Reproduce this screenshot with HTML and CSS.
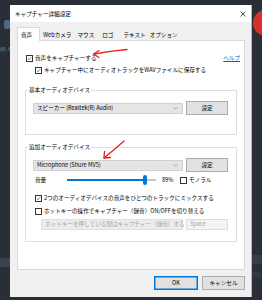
FILE: index.html
```html
<!DOCTYPE html>
<html lang="ja">
<head>
<meta charset="utf-8">
<link rel="stylesheet" href="styles.css">
</head>
<body>
<div class="desk">
  <div class="side-left">
    <span class="app-icon"></span>
    <span class="coord">(0, 0</span>
    <span class="band"></span>
  </div>
  <div class="dialog">
    <div class="titlebar">
      <span class="title">キャプチャー詳細設定</span>
      <svg class="close" viewBox="0 0 6 6" width="6" height="6"><path d="M0.5 0.5L5.5 5.5M5.5 0.5L0.5 5.5" stroke="#222" stroke-width="0.8"/></svg>
    </div>
    <div class="dlg-body">
      <div class="tabs">
        <span class="tab active">音声</span>
        <span class="tab">Webカメラ</span>
        <span class="tab">マウス</span>
        <span class="tab">ロゴ</span>
        <span class="tab">テキスト</span>
        <span class="tab">オプション</span>
      </div>
      <div class="panel">
        <div class="row row1">
          <span class="cb checked"><svg viewBox="0 0 8 8"><path d="M1.3 4.2L3.2 6L6.8 1.8" fill="none" stroke="#222" stroke-width="0.9"/></svg></span>
          <span>音声をキャプチャーする</span>
          <span class="help">ヘルプ</span>
        </div>
        <div class="row row2">
          <span class="cb checked"><svg viewBox="0 0 8 8"><path d="M1.3 4.2L3.2 6L6.8 1.8" fill="none" stroke="#222" stroke-width="0.9"/></svg></span>
          <span>キャプチャー中にオーディオトラックをWAVファイルに保存する</span>
        </div>

        <div class="group g1">
          <div class="legend">基本オーディオデバイス</div>
          <div class="dev-row">
            <div class="combo"><span>スピーカー (Realtek(R) Audio)</span><svg class="chev" viewBox="0 0 6 4" width="5" height="3"><path d="M0.5 0.5L3 3L5.5 0.5" fill="none" stroke="#777" stroke-width="0.8"/></svg></div>
            <div class="btn set">設定</div>
          </div>
        </div>

        <div class="group g2">
          <div class="legend">追加オーディオデバイス</div>
          <div class="dev-row">
            <div class="combo"><span>Microphone (Shure MV5)</span><svg class="chev" viewBox="0 0 6 4" width="5" height="3"><path d="M0.5 0.5L3 3L5.5 0.5" fill="none" stroke="#777" stroke-width="0.8"/></svg></div>
            <div class="btn set">設定</div>
          </div>
          <div class="row vol-row">
            <span class="vol-label">音量</span>
            <div class="slider"><span class="fill"></span><span class="thumb"></span><span class="rest"></span></div>
            <span class="pct">89%</span>
            <span class="cb"></span>
            <span>モノラル</span>
          </div>
          <div class="row mix-row">
            <span class="cb checked"><svg viewBox="0 0 8 8"><path d="M1.3 4.2L3.2 6L6.8 1.8" fill="none" stroke="#222" stroke-width="0.9"/></svg></span>
            <span>2つのオーディオデバイスの音声をひとつのトラックにミックスする</span>
          </div>
          <div class="row hot-row">
            <span class="cb"></span>
            <span>ホットキーの操作でキャプチャー（録音）ON/OFFを切り替える</span>
          </div>
          <div class="dis-row">
            <div class="combo disabled"><span>ホットキーを押している間はキャプチャー（録音）する</span><svg class="chev" viewBox="0 0 6 4" width="5" height="3"><path d="M0.5 0.5L3 3L5.5 0.5" fill="none" stroke="#bbb" stroke-width="0.8"/></svg></div>
            <div class="textbox disabled">Space</div>
          </div>
        </div>
      </div>
      <div class="footer">
        <div class="btn ok">OK</div>
        <div class="btn cancel">キャンセル</div>
      </div>
    </div>
  </div>
  <div class="side-right">
    <span class="rec"></span>
    <span class="rband b1"></span>
    <span class="rband b2"></span>
  </div>
</div>
<svg class="annot" viewBox="0 0 262 300" width="262" height="300">
  <path d="M127 49.5 Q110 51 94 54" fill="none" stroke="#e3231f" stroke-width="1.3" stroke-linecap="round"/>
  <path d="M99 50.5 L93.5 54 L99 57.5" fill="none" stroke="#e3231f" stroke-width="1.3" stroke-linecap="round" stroke-linejoin="round"/>
  <path d="M124 141 Q115 149 104 158" fill="none" stroke="#e3231f" stroke-width="1.3" stroke-linecap="round"/>
  <path d="M104.5 151.5 L104 158 L110.5 157.5" fill="none" stroke="#e3231f" stroke-width="1.3" stroke-linecap="round" stroke-linejoin="round"/>
</svg>
</body>
</html>
```

FILE: styles.css
```css
* { box-sizing: border-box; }

body {
  margin: 0;
  width: 262px;
  height: 300px;
  overflow: hidden;
  position: relative;
  background: #2a2f37;
  font-family: "Noto Sans CJK JP", "Noto Sans", sans-serif;
  font-size: 5.6px;
  line-height: 8px;
  color: #000;
}

.desk {
  display: flex;
  height: 300px;
}

/* background app strips */
.side-left {
  width: 10px;
  flex: none;
  display: flex;
  flex-direction: column;
  align-items: flex-start;
  padding-top: 20px;
}
.app-icon {
  width: 6px;
  height: 9px;
  margin-left: 4px;
  background: #4a6a8c;
  border-radius: 2px;
}
.coord {
  margin-top: 16px;
  font-family: "DejaVu Sans", sans-serif;
  font-size: 5px;
  color: #9aa3ad;
  white-space: nowrap;
}
.band {
  margin-top: 205px;
  width: 10px;
  height: 9px;
  background: #3a4350;
}

.side-right {
  flex: 1;
  position: relative;
  overflow: hidden;
}
.rec {
  position: absolute;
  left: 1px;
  top: 10px;
  width: 26px;
  height: 26px;
  border-radius: 50%;
  background: #d8312b;
}
.rband {
  position: absolute;
  left: 0;
  width: 10px;
  height: 9px;
  background: #353c47;
}
.rband.b1 { top: 255px; }
.rband.b2 { top: 272px; height: 6px; background: #303742; }

/* dialog */
.dialog {
  flex: none;
  width: 242px;
  height: 292px;
  margin-top: 5px;
  background: #f0f0f0;
  display: flex;
  flex-direction: column;
  border-right: 1px solid #b5b5b5;
}
.titlebar {
  height: 17px;
  flex: none;
  background: #fff;
  display: flex;
  align-items: center;
  justify-content: space-between;
  padding: 0 5px 0 5px;
}
.close { display: block; }

.dlg-body {
  flex: 1;
  display: flex;
  flex-direction: column;
  padding: 5px 6px 0 7px;
}
.tabs {
  display: flex;
  align-items: flex-end;
  height: 13px;
  position: relative;
  z-index: 1;
}
.tab {
  height: 11px;
  display: flex;
  align-items: center;
  white-space: nowrap;
}
.tab.active {
  height: 14px;
  margin-bottom: -1px;
  background: #fff;
  border: 1px solid #d9d9d9;
  border-bottom: none;
  padding: 0 7px 0 3px;
}
.tab:nth-child(2) { padding: 0 3px; }
.tab:nth-child(3) { padding: 0 4px 0 3px; }
.tab:nth-child(4) { padding: 0 5px 0 4px; }
.tab:nth-child(5) { padding: 0 2px 0 5px; }
.tab:nth-child(6) { padding: 0 2px; }

.panel {
  flex: none;
  height: 230px;
  background: #fff;
  border: 1px solid #d9d9d9;
}

.row {
  display: flex;
  align-items: center;
  height: 10px;
  white-space: nowrap;
}
.row1 { margin: 12px 4px 0 8px; }
.row2 { margin: 2px 0 0 17px; }

.cb {
  flex: none;
  width: 7px;
  height: 7px;
  border: 0.8px solid #333;
  background: #fff;
  margin-right: 2px;
  display: flex;
}
.cb svg { width: 100%; height: 100%; display: block; }

.help {
  margin-left: auto;
  color: #1a5fb4;
  text-decoration: underline;
}

.group {
  margin: 15px 7px 0;
  border: 1px solid #dedede;
}
.g1 { padding-bottom: 19px; }
.g2 { margin-top: 12px; padding-bottom: 11px; }
.legend {
  margin: -5px 0 0 2px;
  padding: 0 1px;
  width: max-content;
  height: 9px;
  line-height: 9px;
  background: #fff;
  white-space: nowrap;
}

.dev-row {
  display: flex;
  align-items: center;
  gap: 3px;
  height: 14px;
  margin: 6px 0 0 7px;
}
.combo {
  width: 150px;
  height: 11px;
  background: #e5e5e5;
  border: 1px solid #d0d0d0;
  display: flex;
  align-items: center;
  justify-content: space-between;
  padding: 0 4px 0 3px;
  white-space: nowrap;
}
.chev { display: block; }

.btn {
  height: 14px;
  background: #e1e1e1;
  border: 1px solid #adadad;
  display: flex;
  align-items: center;
  justify-content: center;
  white-space: nowrap;
}
.set { width: 42px; }

.vol-row { margin: 3px 0 0 9px; }
.vol-label { width: 32px; }
.slider {
  width: 89px;
  height: 10px;
  display: flex;
  align-items: center;
}
.fill { width: 76px; height: 2px; background: #0078d7; }
.thumb { width: 4px; height: 10px; background: #0078d7; border-radius: 2px; }
.rest { flex: 1; height: 2px; background: #c4c4c4; }
.pct { width: 24px; padding-left: 6px; }

.mix-row { margin: 8px 0 0 9px; }
.hot-row { margin: 3px 0 0 9px; }

.dis-row {
  display: flex;
  align-items: center;
  gap: 3px;
  height: 12px;
  margin: 2px 0 0 15px;
}
.combo.disabled {
  width: 142px;
  height: 11px;
  background: #ececec;
  border-color: #e0e0e0;
  color: #a5a5a5;
}
.textbox {
  width: 42px;
  height: 11px;
  border: 1px solid #dcdcdc;
  background: #f4f4f4;
  color: #a5a5a5;
  display: flex;
  align-items: center;
  padding-left: 3px;
}

.footer {
  display: flex;
  justify-content: flex-end;
  gap: 4px;
  padding-top: 6px;
}
.ok {
  width: 44px;
  border: 1px solid #0078d7;
  box-shadow: inset 0 0 0 0.5px #0078d7;
}
.cancel { width: 43px; }

.annot {
  position: absolute;
  left: 0;
  top: 0;
  pointer-events: none;
}
```
